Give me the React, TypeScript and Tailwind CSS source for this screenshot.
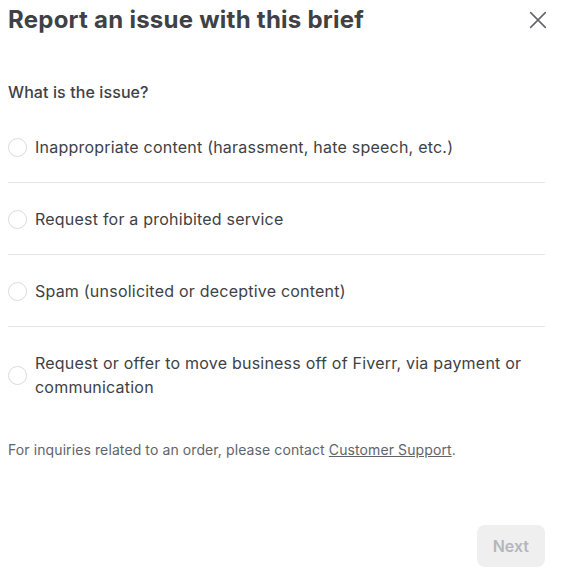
import React, { useState } from "react";

const options = [
  "Inappropriate content (harassment, hate speech, etc.)",
  "Request for a prohibited service",
  "Spam (unsolicited or deceptive content)",
  "Request or offer to move business off of Fiverr, via payment or communication",
];

export default function App() {
  const [selected, setSelected] = useState<number | null>(null);

  return (
    <div className="w-[561px] h-[574px] bg-white pl-2 pr-4 flex flex-col font-['Inter',sans-serif] text-[#404145]">
      {/* Header */}
      <div className="flex items-center justify-between pt-1">
        <h1 className="text-[24px] leading-8 font-bold tracking-[0.25px]">
          Report an issue with this brief
        </h1>
        <button className="text-[#62646a] -mr-1">
          <svg width="22" height="22" viewBox="0 0 24 24" fill="none" stroke="currentColor" strokeWidth="1.7" strokeLinecap="round">
            <path d="M4 4l16 16M20 4L4 20" />
          </svg>
        </button>
      </div>

      <p className="mt-[44px] text-[16px] leading-6 font-medium tracking-[0.1px]">What is the issue?</p>

      {/* Options */}
      <div className="mt-[7px]">
        {options.map((label, i) => (
          <label
            key={i}
            className={`flex items-center gap-2 pt-6 pb-[23px] cursor-pointer ${
              i < options.length - 1 ? "border-b border-[#e4e5e7]" : ""
            }`}
          >
            <span
              onClick={() => setSelected(i)}
              className={`w-[19px] h-[19px] shrink-0 rounded-full border ${
                selected === i ? "border-[6px] border-[#1dbf73]" : "border-[#dadbdd]"
              }`}
            />
            <span className="text-[16px] leading-6 tracking-[0.22px]">{label}</span>
          </label>
        ))}
      </div>

      <p className="mt-[18px] text-[14px] leading-5 text-[#62646a] tracking-[0.1px]">
        For inquiries related to an order, please contact{" "}
        <a className="underline cursor-pointer">Customer Support</a>.
      </p>

      {/* Footer */}
      <div className="mt-auto mb-[7px] flex justify-end">
        <button
          disabled
          className="h-[42px] px-4 rounded-lg bg-[#efeff0] text-[#b5b6ba] text-[16px] font-semibold"
        >
          Next
        </button>
      </div>
    </div>
  );
}
